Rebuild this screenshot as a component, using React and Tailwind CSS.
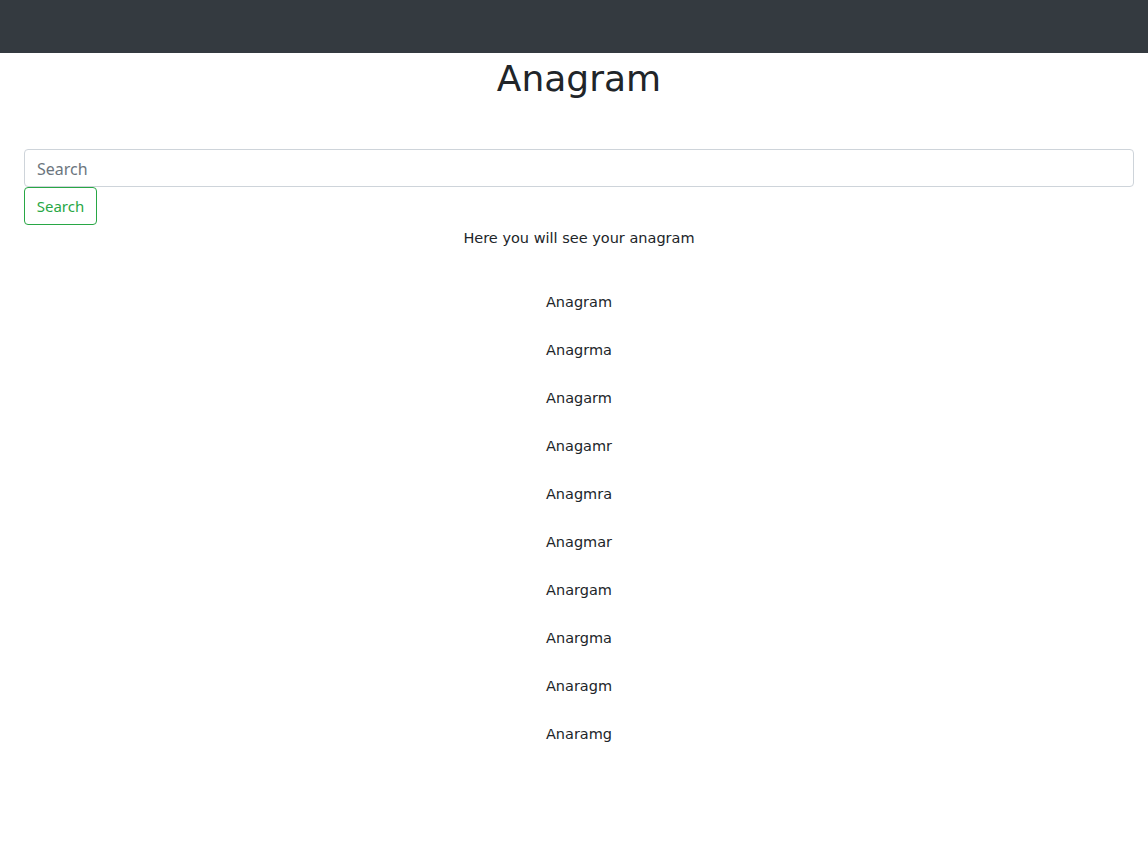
import React from 'react';

const anagrams = [
  'Anagram',
  'Anagrma',
  'Anagarm',
  'Anagamr',
  'Anagmra',
  'Anagmar',
  'Anargam',
  'Anargma',
  'Anaragm',
  'Anaramg',
];

export default function App() {
  return (
    <div className="min-h-screen bg-white text-[#212529]">
      {/* Dark navbar */}
      <nav className="h-[53px] bg-[#343a40]" />

      <div className="pl-6 pr-[14px]">
        <h1 className="h-[48px] pt-[2px] text-center text-[36px] leading-[48px] font-['DejaVu_Sans',sans-serif] text-[#212529]">
          Anagram
        </h1>

        <input
          type="text"
          placeholder="Search"
          className="mt-[48px] block h-[38px] w-full rounded-[4px] border border-[#ced4da] px-3 pt-[1px] text-base font-['Noto_Sans',sans-serif] text-[#495057] placeholder:text-[#6c757d] outline-none"
        />
        <button className="block h-[38px] w-[73px] rounded-[4px] border border-[#28a745] text-[15px] font-['Noto_Sans',sans-serif] text-[#28a745]">
          Search
        </button>

        <p className="pt-[1px] text-center text-[14.5px] leading-[24px] font-['DejaVu_Sans',sans-serif]">
          Here you will see your anagram
        </p>

        <ul className="mt-[28px] flex flex-col items-center">
          {anagrams.map((word) => (
            <li
              key={word}
              className="flex h-[48px] items-center pt-[2px] text-[14.5px] font-['DejaVu_Sans',sans-serif]"
            >
              {word}
            </li>
          ))}
        </ul>
      </div>
    </div>
  );
}
